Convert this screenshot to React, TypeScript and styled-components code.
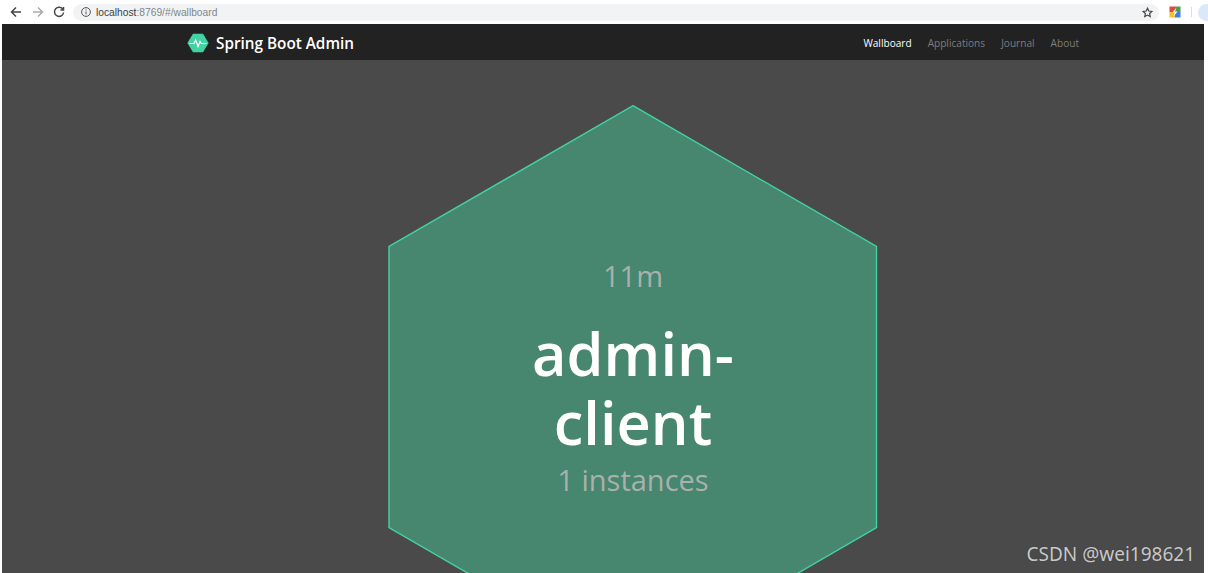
import React from "react";
import styled, { createGlobalStyle } from "styled-components";

const Global = createGlobalStyle`
  html, body { margin: 0; padding: 0; background: #fff; height: 100%; overflow: hidden; }
  #root { height: 100%; }
  * { box-sizing: border-box; }
`;

const Page = styled.div`
  position: relative;
  width: 1208px;
  height: 573px;
  display: flex;
  flex-direction: column;
  overflow: hidden;
  background: #fff;
  font-family: "Open Sans", "Noto Sans", sans-serif;
`;

const BrowserBar = styled.div`
  height: 24px;
  flex: none;
  display: flex;
  align-items: center;
  padding: 0 0 0 10px;
  background: #fff;
`;

const NavGroup = styled.div`
  display: flex;
  gap: 9.5px;
  flex: none;
`;

const NavIcon = styled.svg<{ $color: string }>`
  width: 12px;
  height: 12px;
  flex: none;
  fill: none;
  stroke: ${(p) => p.$color};
  stroke-width: 1.5;
`;

const AddressBar = styled.div`
  margin-left: 8px;
  width: 1086px;
  height: 17px;
  flex: none;
  display: flex;
  align-items: center;
  padding: 0 6px 0 8px;
  border-radius: 9px;
  background: #f1f3f4;
  font-family: "Liberation Sans", sans-serif;
  font-size: 10.25px;
  color: #80868b;
`;

const InfoIcon = styled.svg`
  width: 10px;
  height: 10px;
  flex: none;
  margin-right: 5px;
  fill: none;
  stroke: #555;
`;

const Host = styled.span`
  color: #3c4043;
`;

const UrlText = styled.span`
  flex: 1;
`;

const StarIcon = styled.svg`
  width: 11px;
  height: 11px;
  flex: none;
  fill: none;
  stroke: #444;
  stroke-width: 1.3;
`;

const ExtensionIcon = styled.svg`
  width: 12px;
  height: 12px;
  flex: none;
  margin-left: 10px;
`;

const BarDivider = styled.div`
  width: 1px;
  height: 10px;
  flex: none;
  margin-left: 10px;
  background: #dadce0;
`;

const Avatar = styled.div`
  width: 12px;
  height: 17px;
  flex: none;
  margin-left: 6px;
  border-radius: 9px 0 0 9px;
  background: #dbe7fb;
`;

const Content = styled.div`
  flex: 1;
  min-height: 0;
  width: 1202px;
  margin-left: 2px;
  display: flex;
  flex-direction: column;
  background: #4a4a4a;
  overflow: hidden;
`;

const NavBar = styled.nav`
  height: 36px;
  flex: none;
  display: flex;
  align-items: center;
  padding: 0 125px 0 185px;
  background: #222222;
`;

const Brand = styled.div`
  display: flex;
  align-items: center;
  gap: 7px;
  padding-top: 1px;
  font-size: 15.3px;
  font-weight: 600;
  color: #fff;
`;

const BrandLogo = styled.svg`
  width: 22px;
  height: 20px;
  flex: none;
`;

const NavLinks = styled.div`
  margin-left: auto;
  padding-top: 1px;
  display: flex;
  gap: 16px;
  font-size: 10.1px;
`;

const NavLink = styled.span<{ $active?: boolean }>`
  color: ${(p) => (p.$active ? "#ffffff" : "#7d7d7d")};
  font-weight: ${(p) => (p.$active ? 500 : 400)};
`;

const Board = styled.main`
  flex: 1;
  min-height: 0;
  display: flex;
  padding: 45px 0 0 386px;
`;

const Cell = styled.div`
  position: relative;
  width: 490px;
  height: 565px;
  flex: none;
`;

const HexShape = styled.svg`
  position: absolute;
  inset: 0;
  width: 100%;
  height: 100%;
`;

const CellBody = styled.div`
  position: absolute;
  inset: 0;
  display: flex;
  flex-direction: column;
  align-items: center;
  padding-top: 149px;
`;

const Uptime = styled.div`
  font-size: 29px;
  line-height: 44px;
  color: #a9b1ad;
`;

const AppName = styled.div`
  width: 260px;
  margin-top: 20px;
  text-align: center;
  font-size: 59.5px;
  line-height: 69px;
  font-weight: 600;
  color: #fff;
`;

const Instances = styled.div`
  margin-top: 2px;
  font-size: 29px;
  line-height: 44px;
  color: #a9b1ad;
`;

const Watermark = styled.div`
  position: absolute;
  right: 13px;
  bottom: 7px;
  font-family: "Noto Sans", sans-serif;
  font-size: 19px;
  line-height: 24px;
  color: #c9c9c9;
  text-shadow: 0 0 1px #333;
`;

export default function App() {
  return (
    <Page>
      <Global />
      <BrowserBar>
        <NavGroup>
          <NavIcon $color="#444" viewBox="0 0 12 12">
            <path d="M11 6H1.5M6 1.5 1.5 6 6 10.5" />
          </NavIcon>
          <NavIcon $color="#aaa" viewBox="0 0 12 12">
            <path d="M1 6h9.5M6 1.5 10.5 6 6 10.5" />
          </NavIcon>
          <NavIcon $color="#444" viewBox="0 0 12 12">
            <path d="M10 3.4A4.6 4.6 0 1 0 10.6 6.5" />
            <path d="M10.5 1v3H7.5" />
          </NavIcon>
        </NavGroup>
        <AddressBar>
          <InfoIcon viewBox="0 0 10 10">
            <circle cx="5" cy="5" r="4.4" />
            <path d="M5 4.4v3M5 2.4v1.1" />
          </InfoIcon>
          <UrlText>
            <Host>localhost</Host>:8769/#/wallboard
          </UrlText>
          <StarIcon viewBox="0 0 12 12">
            <path d="M6 1.3 7.4 4.4 10.8 4.8 8.3 7.1 9 10.5 6 8.8 3 10.5 3.7 7.1 1.2 4.8 4.6 4.4Z" />
          </StarIcon>
        </AddressBar>
        <ExtensionIcon viewBox="0 0 12 12">
          <rect x="0.5" y="0.5" width="5.5" height="5.5" fill="#e8483c" />
          <rect x="6" y="0.5" width="5.5" height="5.5" fill="#4a9a50" />
          <rect x="0.5" y="6" width="5.5" height="5.5" fill="#f4c22e" />
          <rect x="6" y="6" width="5.5" height="5.5" fill="#3f7fe0" />
          <path d="M7.5 1.5 3.5 6.5H6L4.5 10.5 8.5 5.5H6Z" fill="#fff" />
        </ExtensionIcon>
        <BarDivider />
        <Avatar />
      </BrowserBar>
      <Content>
        <NavBar>
          <Brand>
            <BrandLogo viewBox="0 0 22 20">
              <path d="M6 0.8H16L21.6 10 16 19.2H6L0.4 10Z" fill="#42d3a5" />
              <path
                d="M2.5 10.5H7L8.7 7 11 13.5 13 8.5 14.2 10.5H19.5"
                fill="none"
                stroke="#fff"
                strokeWidth="1.2"
              />
            </BrandLogo>
            Spring Boot Admin
          </Brand>
          <NavLinks>
            <NavLink $active>Wallboard</NavLink>
            <NavLink>Applications</NavLink>
            <NavLink>Journal</NavLink>
            <NavLink>About</NavLink>
          </NavLinks>
        </NavBar>
        <Board>
          <Cell>
            <HexShape viewBox="0 0 490 565">
              <polygon
                points="245,0.7 488.5,141.5 488.5,422.5 245,564 1,422.5 1,141.5"
                fill="#47866f"
                stroke="#42d3a5"
                strokeWidth="1.4"
              />
            </HexShape>
            <CellBody>
              <Uptime>11m</Uptime>
              <AppName>admin-client</AppName>
              <Instances>1 instances</Instances>
            </CellBody>
          </Cell>
        </Board>
      </Content>
      <Watermark>CSDN @wei198621</Watermark>
    </Page>
  );
}
